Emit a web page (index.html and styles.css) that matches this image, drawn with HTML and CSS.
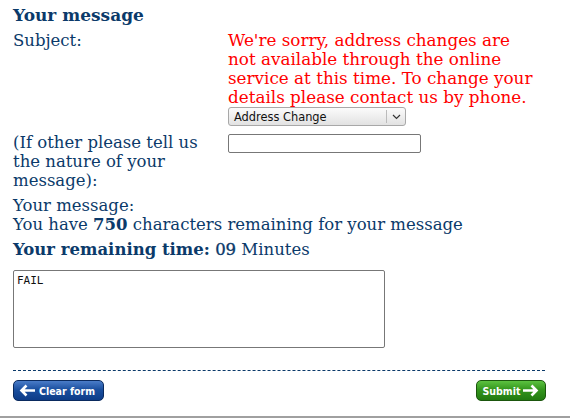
FILE: index.html
```html
<!DOCTYPE html>
<html>
<head>
<meta charset="utf-8">
<link rel="stylesheet" href="styles.css">
</head>
<body>
<div class="page">
  <h2 class="heading">Your message</h2>
  <div class="row">
    <div class="label">Subject:</div>
    <div class="field">
      <p class="warning">We're sorry, address changes are not available through the online service at this time. To change your details please contact us by phone.</p>
      <div class="select">
        <span class="select-text">Address Change</span>
        <span class="select-btn"><svg width="9" height="6" viewBox="0 0 9 6"><path d="M1 1 L4.5 4.5 L8 1" fill="none" stroke="#333" stroke-width="1.2"/></svg></span>
      </div>
    </div>
  </div>
  <div class="row row-other">
    <div class="label">(If other please tell us the nature of your message):</div>
    <div class="field"><div class="input"></div></div>
  </div>
  <div class="line first">Your message:</div>
  <div class="line">You have <b>750</b> characters remaining for your message</div>
  <div class="line time"><b>Your remaining time:</b> <span class="num">09</span> Minutes</div>
  <div class="textarea">FAIL</div>
  <div class="divider"></div>
  <div class="buttons">
    <span class="btn btn-clear"><svg width="17" height="13" viewBox="0 0 17 13"><path d="M16 6.5 H3 M7.5 1.5 L2.5 6.5 L7.5 11.5" fill="none" stroke="#fff" stroke-width="2.6"/></svg>Clear form</span>
    <span class="btn btn-submit">Submit<svg width="17" height="13" viewBox="0 0 17 13"><path d="M1 6.5 H14 M9.5 1.5 L14.5 6.5 L9.5 11.5" fill="none" stroke="#fff" stroke-width="2.6"/></svg></span>
  </div>
</div>
<div class="bottom-rule"></div>
</body>
</html>
```
FILE: styles.css
```css
html, body { margin: 0; padding: 0; background: #fff; }
body { font-family: "DejaVu Serif", serif; color: #0b3a6a; }
.page { padding: 5px 25px 0 13px; width: 532px; }
.heading { font-size: 17px; font-weight: bold; margin: 0; line-height: 21px; }
.row { display: flex; margin-top: 5px; }
.label { width: 215px; font-size: 16.5px; line-height: 19px; }
.field { flex: 1; }
.warning { margin: 0; color: #ff0000; font-size: 16.8px; line-height: 19px; width: 308px; }
.select {
  margin-top: 0; width: 176px; height: 17px; border: 1px solid #a8a8a8; border-radius: 3px;
  background: linear-gradient(#fbfbfb, #e2e2e2); display: flex; align-items: center;
  font-family: "DejaVu Sans", sans-serif; font-size: 11.4px; color: #111;
}
.select-text { flex: 1; padding-left: 5px; }
.select-btn { width: 18px; height: 13px; border-left: 1px solid #bbb; display: flex; align-items: center; justify-content: center; }
.row-other { margin-top: 7px; }
.input { width: 191px; height: 17px; border: 1px solid #777; border-radius: 2px; margin-top: 1px; }
.line { font-size: 16.5px; line-height: 19px; }
.line b { font-weight: bold; }
.num { -webkit-text-stroke: 0.35px #0b3a6a; }
.line.first { margin-top: 6px; }
.time { margin-top: 6px; }
.textarea {
  margin-top: 11px; width: 364px; height: 70px; border: 1px solid #777; border-radius: 2px;
  font-family: "DejaVu Sans Mono", monospace; font-size: 11px; color: #111; padding: 3px 3px; line-height: 13px;
}
.divider { margin-top: 22px; border-top: 1px dashed #0b3a6a; width: 532px; }
.buttons { display: flex; justify-content: space-between; margin-top: 9px; width: 533px; }
.btn {
  display: inline-flex; align-items: center; gap: 2px; border-radius: 5px;
  color: #fff; font-family: "DejaVu Sans", sans-serif; font-stretch: condensed; font-weight: bold; font-size: 10.5px;
  padding: 0 5px; box-sizing: border-box;
}
.btn-clear { width: 91px; height: 21px; background: linear-gradient(#4a7cc8, #1a4f9f 45%, #0d3c88); border: 1px solid #0a2a5e; gap: 3px; }
.btn-submit { width: 70px; height: 21px; background: linear-gradient(#5cc240, #34961d 45%, #217a10); border: 1px solid #1b560d; justify-content: center; }
.bottom-rule { position: absolute; left: 0; top: 416px; width: 570px; height: 2px; background: #a0a0a0; }
```
